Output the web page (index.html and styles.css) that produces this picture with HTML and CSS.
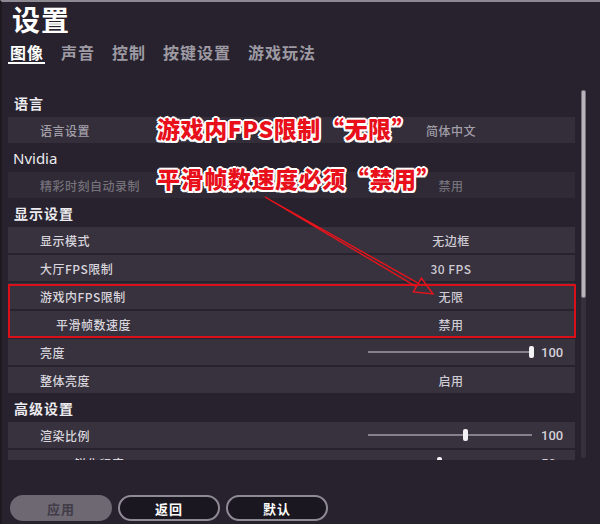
FILE: index.html
```html
<!DOCTYPE html>
<html lang="zh-CN">
<head>
    <meta charset="UTF-8">
    <title>设置</title>
    <link rel="stylesheet" href="styles.css">
</head>
<body>
    <div class="screen">
        <h1 class="title">设置</h1>
        <nav class="tabs">
            <span class="tab active">图像</span>
            <span class="tab">声音</span>
            <span class="tab">控制</span>
            <span class="tab">按键设置</span>
            <span class="tab">游戏玩法</span>
        </nav>

        <div class="main">
            <div class="list">
                <div class="group-title">语言</div>
                <div class="row dim">
                    <span class="label">语言设置</span>
                    <span class="val">简体中文</span>
                </div>

                <div class="group-title latin">Nvidia</div>
                <div class="row disabled">
                    <span class="label">精彩时刻自动录制</span>
                    <span class="val">禁用</span>
                </div>

                <div class="group-title">显示设置</div>
                <div class="row">
                    <span class="label">显示模式</span>
                    <span class="val">无边框</span>
                </div>
                <div class="row">
                    <span class="label">大厅FPS限制</span>
                    <span class="val">30 FPS</span>
                </div>
                <div class="row">
                    <span class="label">游戏内FPS限制</span>
                    <span class="val">无限</span>
                </div>
                <div class="row sub">
                    <span class="label">平滑帧数速度</span>
                    <span class="val">禁用</span>
                </div>
                <div class="row">
                    <span class="label">亮度</span>
                    <div class="slider">
                        <div class="track"><i class="thumb" style="left: 100%"></i></div>
                        <span class="num">100</span>
                    </div>
                </div>
                <div class="row">
                    <span class="label">整体亮度</span>
                    <span class="val">启用</span>
                </div>

                <div class="group-title">高级设置</div>
                <div class="row">
                    <span class="label">渲染比例</span>
                    <div class="slider">
                        <div class="track"><i class="thumb" style="left: 60%"></i></div>
                        <span class="num">100</span>
                    </div>
                </div>
                <div class="row">
                    <span class="label">DLSS 锐化程度</span>
                    <div class="slider">
                        <div class="track"><i class="thumb" style="left: 44%"></i></div>
                        <span class="num">50</span>
                    </div>
                </div>
            </div>
            <div class="scrollbar"><div class="scroll-thumb"></div></div>
        </div>

        <div class="footer">
            <button class="btn apply">应用</button>
            <button class="btn">返回</button>
            <button class="btn">默认</button>
        </div>

        <!-- annotations drawn on top of the screenshot -->
        <div class="note note-1">游戏内FPS限制“无限”</div>
        <div class="note note-2">平滑帧数速度必须“禁用”</div>
        <svg class="marks" width="600" height="524" viewBox="0 0 600 524">
            <rect x="9" y="285" width="566" height="52" fill="none" stroke="#d8101a" stroke-width="2"/>
            <polygon points="265,197 418.4,283.3 421.4,278.1 433,294 413.4,291.9 416.4,286.7"
                     fill="none" stroke="#e8141c" stroke-width="1.4" stroke-linejoin="miter"/>
        </svg>
    </div>
</body>
</html>
```

FILE: styles.css
```css
body {
    margin: 0;
    background: #27222d;
    font-family: "Noto Sans CJK SC", sans-serif;
    color: #e6e3ea;
}
.screen {
    position: relative;
    width: 600px;
    height: 524px;
    box-sizing: border-box;
    border-top: 2px solid #8d8992;
    border-left: 2px solid #1c1921;
    background: #27222d;
    display: flex;
    flex-direction: column;
    overflow: hidden;
}
.title {
    margin: 0;
    padding-left: 10px;
    font-size: 28px;
    line-height: 34px;
    font-weight: bold;
    letter-spacing: 1px;
    color: #fff;
}
.tabs {
    display: flex;
    gap: 14px;
    margin-top: 6px;
    padding-left: 6px;
}
.tab {
    padding: 0 1px 0 2px;
    font-size: 16px;
    line-height: 20px;
    font-weight: bold;
    letter-spacing: 1px;
    color: #9e9aa3;
    border-bottom: 2px solid transparent;
}
.tab.active {
    color: #fff;
    border-bottom-color: #fff;
}
.main {
    display: flex;
    margin-top: 26px;
    height: 370px;
}
.list {
    width: 567px;
    margin-left: 6px;
    overflow: hidden;
}
.group-title {
    height: 27px;
    line-height: 27px;
    padding-left: 6px;
    font-size: 14px;
    font-weight: bold;
    letter-spacing: 1px;
    color: #ecebef;
}
.group-title.latin {
    font-family: "Noto Sans", sans-serif;
    font-size: 15px;
    font-weight: normal;
    letter-spacing: 0;
    padding-left: 5px;
}
.row {
    display: flex;
    align-items: center;
    height: 26px;
    margin-bottom: 2px;
    background: #37323e;
    font-size: 12px;
    font-weight: 500;
    letter-spacing: 0.5px;
}
.row .label {
    flex: 1;
    padding-left: 32px;
    color: #d8d5dc;
}
.row.sub .label {
    padding-left: 48px;
}
.row .val {
    width: 200px;
    margin-right: 24px;
    text-align: center;
    color: #cfcbd3;
}
.row.dim {
    background: #332e3a;
}
.row.dim .label,
.row.dim .val {
    color: #a29ea8;
}
.row.disabled {
    background: #2f2a35;
}
.row.disabled .label,
.row.disabled .val {
    color: #75717b;
}
.slider {
    display: flex;
    align-items: center;
    margin-right: 8px;
}
.track {
    position: relative;
    width: 164px;
    height: 2px;
    background: #85818b;
}
.thumb {
    position: absolute;
    top: -5px;
    width: 5px;
    height: 12px;
    margin-left: -3px;
    border-radius: 2px;
    background: #f2f1f4;
}
.num {
    width: 26px;
    margin-left: 9px;
    font-family: "Roboto", sans-serif;
    font-size: 13px;
    letter-spacing: 0;
    color: #d4d0d8;
}
.scrollbar {
    width: 5px;
    margin-left: 6px;
    height: 368px;
    background: #35303c;
    border-radius: 2px;
}
.scroll-thumb {
    height: 208px;
    box-sizing: border-box;
    border: 1px solid #77737d;
    border-radius: 2px;
    background: #b7b4bc;
}
.footer {
    display: flex;
    gap: 6px;
    padding: 35px 0 0 8px;
}
.btn {
    width: 102px;
    height: 26px;
    box-sizing: border-box;
    border: 2px solid #8f8b95;
    border-radius: 13px;
    background: #1b1720;
    color: #fff;
    font-family: "Noto Sans CJK SC", sans-serif;
    font-size: 13px;
    font-weight: bold;
    letter-spacing: 1px;
    padding: 0;
}
.btn.apply {
    border-color: #6e6873;
    background: #6e6873;
    color: #413c47;
}
.note {
    position: absolute;
    left: 155px;
    font-size: 23px;
    line-height: 28px;
    font-weight: 900;
    letter-spacing: 0.6px;
    color: #e8101a;
    white-space: nowrap;
    text-shadow:
        2px 0 0 #fff, -2px 0 0 #fff, 0 2px 0 #fff, 0 -2px 0 #fff,
        1.5px 1.5px 0 #fff, -1.5px 1.5px 0 #fff, 1.5px -1.5px 0 #fff, -1.5px -1.5px 0 #fff;
}
.note-1 {
    top: 112px;
}
.note-2 {
    top: 162px;
}
.marks {
    position: absolute;
    top: -2px;
    left: -2px;
}
```
